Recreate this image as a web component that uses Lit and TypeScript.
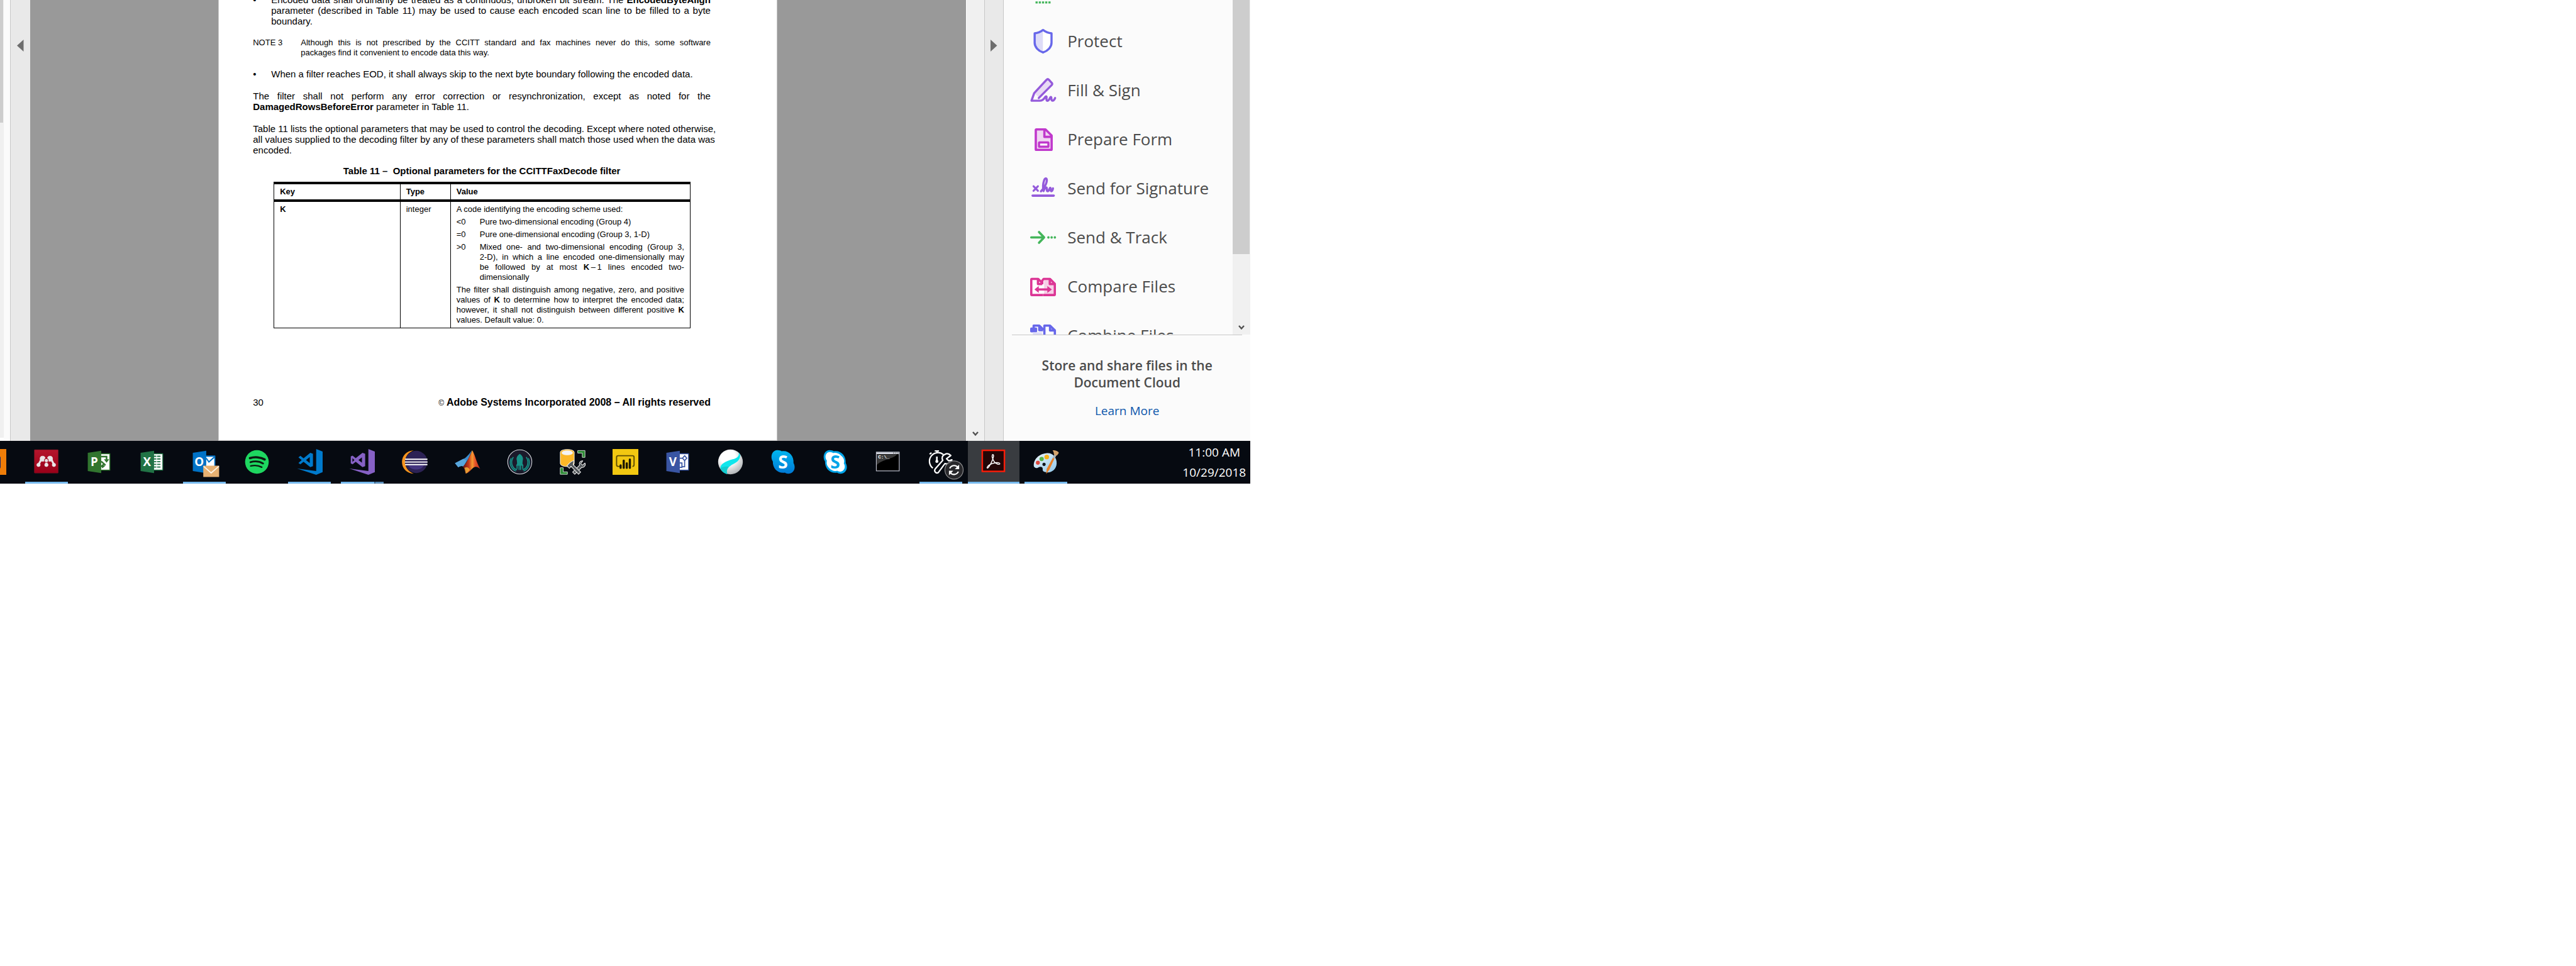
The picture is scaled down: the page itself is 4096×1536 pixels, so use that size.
import { LitElement, html, svg, css, TemplateResult } from "lit";
import { customElement, property } from "lit/decorators.js";
import { classMap } from "lit/directives/class-map.js";

type Glyph = TemplateResult;

/* ---------- tool icons, drawn on a 48 unit box ---------- */

const toolIcons: Record<string, Glyph> = {
  dots: svg`<path d="M10 43.2H38" stroke="#43b55a" stroke-width="4" stroke-dasharray="4 2" fill="none"/>`,
  protect: svg`
    <path d="M24 3.2C19 7 14 9 8.4 9.4V27C8.4 35 15 42 24 45Z" fill="#dedcf8"/>
    <path d="M24 3.2C29 7 34 9 39.800 9.400V27C39.800 35 33 42 24 45Z" fill="#fff"/>
    <path d="M24 3.200C19 7 14 9 8.400 9.400V27C8.400 35 15 42 24 45C33 42 39.800 35 39.800 27V9.400C34 9 29 7 24 3.200Z" fill="none" stroke="#6767ea" stroke-width="4" stroke-linejoin="round"/>`,
  sign: svg`
    <path d="M8 29.500L32.800 4L41 12L17 38Z" fill="#e8daf4"/>
    <path d="M16 38.500L40 14.500C41.500 13 41.500 11.500 40 10L35 4.500C33.500 3 32 3 30.500 4.500L7.500 29.500L2.500 43.500H18C22 43.500 25 41 27 38C29 34.500 31 34.500 30.500 38C30 42.500 30.500 44 33 43.500C36 42.500 36.500 37 38.500 36.500C40.500 36.500 38.500 42.500 41 43.300C43.500 44 45 42 46.500 38.500" fill="none" stroke="#945adb" stroke-width="4" stroke-linejoin="round" stroke-linecap="round"/>`,
  form: svg`
    <path d="M10.500 5.600H29L40 17V43.600H10.500Z" fill="#f0d5f2"/>
    <path d="M11.500 5.600H28.500L40 17V42.600Q40 43.600 39 43.600H11.500Q10.500 43.600 10.500 42.600V6.600Q10.500 5.600 11.500 5.600Z M26.500 6V19.500H39" fill="none" stroke="#c038cc" stroke-width="4.200" stroke-linejoin="round"/>
    <rect x="16.500" y="29.800" width="17.500" height="8" rx="1" fill="#fff" stroke="#c038cc" stroke-width="4"/>`,
  signature: svg`
    <g fill="none" stroke="#945adb" stroke-linecap="round" stroke-linejoin="round">
      <path d="M6.300 20L14.500 28.500M14.500 20L6.300 28.500" stroke-width="3.600"/>
      <path d="M20 29.500C26 24 31.500 14 31 8C30.500 4.500 27.500 4.500 26 9C24 15 23.500 23 25 29C26.500 24.500 29 22 30.500 22.500C32.500 24 29.500 29 32.500 29.300C36 29 35.500 24 37.500 23C39 23 37 29 39.500 29.300C41 29 42 27 42.500 24" stroke-width="4"/>
      <path d="M4.500 37.600H44" stroke-width="4.200"/>
    </g>`,
  track: svg`
    <g fill="none" stroke="#43b55a" stroke-width="4.200" stroke-linecap="round" stroke-linejoin="round">
      <path d="M2 24H26M16.500 14L26 24L16.500 34"/></g>
    <g fill="#43b55a"><circle cx="34" cy="24" r="2.200"/><circle cx="40" cy="24" r="2.200"/><circle cx="46" cy="24" r="2.200"/></g>`,
  compare: svg`
    <path d="M26 10H37L46 19V40H26Z" fill="#f6cfe6"/>
    <path d="M2 10H22V40H2Z" fill="#fff"/>
    <g fill="none" stroke="#dc3695" stroke-width="4.200" stroke-linejoin="round">
      <path d="M24 40H3Q2.100 40 2.100 39V11Q2.100 10 3 10H15L22 17M14.500 10V19.500H22.500"/>
      <path d="M24 40H45Q45.900 40 45.900 39V19L37 10H25L22.500 13V20M36.500 10V19.500H45"/>
    </g>
    <path d="M8 29.500L16 23V27.500H32V23L40.500 29.500L32 36V31.500H16V36Z" fill="#dc3695"/>`,
  combine: svg`
    <path d="M26 6H36L46 15V34H26Z" fill="#fff"/>
    <g fill="none" stroke="#6767ea" stroke-width="4.200" stroke-linejoin="round">
      <path d="M6.500 12V5.500H17L25 13.500M17 5.500V14H24"/>
      <path d="M26.500 34V5.500H37L46 14.500V34M37 5.500V14.500H46"/>
    </g>
    <rect x="0" y="9" width="13" height="9" rx="2" fill="#6767ea"/><path d="M5 18H22V30H5Z" fill="#dedcf8"/>`,
};

/* ---------- taskbar icons, drawn on a 48 unit box ---------- */

const officeDoor = (fill: string, letter: string): Glyph => svg`
  <path d="M3 7L28 3.200V44.800L3 41Z" fill=${fill}/>
  <text x="15" y="31.700" font-family="Open Sans, sans-serif" font-weight="700" font-size="22" text-anchor="middle" fill="#fff">${letter}</text>`;

const studioBlade = svg`<path d="M36 0L48 4.700V43L36 48L.5 36.300L36 41Z"/>`;

const taskIcons: Record<string, Glyph> = {
  mendeley: svg`
    <defs><linearGradient id="men" x2="0" y2="1"><stop offset="0" stop-color="#b5152c"/><stop offset="1" stop-color="#980019"/></linearGradient></defs>
    <rect x="1.800" y="1.300" width="44.600" height="43.400" rx="1" fill="url(#men)" stroke="#6d1422" stroke-width=".8"/>
    <g fill="#e9e4e6" stroke="#e9e4e6"><path d="M9.700 29L15 19M38.300 29L33.500 19M24.300 28V22M17 19L24.300 23L31 19" fill="none" stroke-width="3.600"/>
    <circle cx="17.300" cy="18" r="4.800"/><circle cx="31" cy="18" r="4.800"/>
    <circle cx="9.700" cy="29.500" r="3.200"/><circle cx="24.300" cy="29.500" r="3.200"/><circle cx="38.300" cy="29.500" r="3.200"/></g>
    <circle cx="24.300" cy="21.300" r="3.600" fill="#e9e4e6" stroke="#a60c23" stroke-width="1.200"/>`,
  project: svg`
    <rect x="26" y="8" width="19" height="32" rx="1" fill="#31752f"/><path d="M26 9.600H43.200V38.400H26Z" fill="#fff"/>
    <path d="M28 14H38V20M28 23L36 30M28 33L34 27" stroke="#31752f" stroke-width="3" fill="none"/><path d="M33 19H43L38 25.500Z M28 30L36 31L30 36Z" fill="#31752f"/>
    ${officeDoor("#31752f", "P")}`,
  excel: svg`
    <rect x="26" y="8" width="19" height="32" rx="1" fill="#217346"/><path d="M26 9.600H43.500V38.400H26Z" fill="#fff"/>
    <path d="M27 13.500H40M27 18.500H40M27 23.500H40M27 28.500H40M27 33.500H40" stroke="#217346" stroke-width="2.200"/><path d="M33 11V37" stroke="#fff" stroke-width="1.400"/>
    ${officeDoor("#217346", "X")}`,
  outlook: svg`
    <rect x="26" y="12" width="19" height="24" rx="1" fill="#0072c6"/><path d="M26 14.500H43V34H26Z" fill="#fff"/>
    <path d="M28 17L33 24L43.500 14.500" stroke="#0072c6" stroke-width="2.400" fill="none"/>
    ${officeDoor("#0072c6", "O")}
    <rect x="22.500" y="31" width="29.500" height="21" fill="#e7b172"/><path d="M23 32L37.200 44.500L51.500 32" fill="none" stroke="#fff6e8" stroke-width="2"/>`,
  spotify: svg`
    <circle cx="24" cy="24" r="22" fill="#1ed760"/>
    <g fill="none" stroke="#0b1a10" stroke-linecap="round"><path d="M11 17C20 14 31 15 38.500 19.500" stroke-width="4.200"/><path d="M12 24.500C20 22 29 23 35.500 26.800" stroke-width="3.400"/><path d="M12.500 31.500C20 29.800 27 30.400 33 33.800" stroke-width="2.800"/></g>`,
  vscode: svg`<g fill="#007acc">${studioBlade}
    <path fill-rule="evenodd" d="M25 7L30 8.700V32L25 33.700L12.500 23.700L6.600 28.300L3 26L9 20.500L3 15.500L6.600 12.700L12.500 17.300Z M24 15V26L17 20.500Z"/></g>`,
  studio: svg`<g fill="#8661c5">${studioBlade}
    <path fill-rule="evenodd" d="M25 7L30 8.700V32L25 33.700L12.400 23.700L6.600 28.300L3.200 26.700V13.700L6.600 12.300L12.400 17Z M24 15.500V25.500L17.500 20.500Z M6.300 17V24L10 20.500Z"/></g>`,
  eclipse: svg`
    <path d="M22 2.500C9 3 .2 12 .2 24S9 45.500 22 46C12 42 6 34 6 24S12 6 22 2.500Z" fill="#f7941e"/>
    <circle cx="26.800" cy="24" r="20.700" fill="#2c2255"/><path d="M12 30H41C39 35 34 38 26.500 38S14 35 12 30Z" fill="#44357f"/>
    <path d="M6 19H47.600M5.500 24.200H47.800M6 29H47.600" stroke="#fff" stroke-width="2.200"/>`,
  matlab: svg`
    <defs><linearGradient id="mat"><stop offset="0" stop-color="#5a1512"/><stop offset=".35" stop-color="#c93a1d"/><stop offset=".55" stop-color="#f59b31"/><stop offset=".7" stop-color="#e8552a"/><stop offset="1" stop-color="#b82a1c"/></linearGradient></defs>
    <path d="M.5 26.200L15.800 18.500C22 16 27 9 32 2.500L26 17L16.500 32.500C13 31 10 31.500 6.600 34Z" fill="#3f8fd0"/>
    <path d="M15.800 18.500L22 21.500L16.500 32.500C13 31 10 31.500 6.600 34L.5 26.200Z" fill="#58a6dc"/>
    <path d="M32.600 2.300C37 8 40 24 47.500 37.300C43 33 39 32 35 34.500C30 38 26 45 20.700 45.700C19 41 18 35 15 33C22 26 28 14 32.600 2.300Z" fill="url(#mat)"/>
    <path d="M20.700 45.700C19.500 40 19.500 38 18 35C23 33 26 34 28 39C25 43 23 45 20.700 45.700Z" fill="#fbc23c" opacity=".75"/>`,
  kraken: svg`
    <circle cx="24" cy="24" r="22.500" fill="#1b1a2b" stroke="#dfe3e8" stroke-width="1.200"/>
    <path d="M24 9C29 12 31 17 29.500 21L29 27L31 31H17L19 27L18.500 21C17 17 19 12 24 9Z" fill="#179287"/>
    <g fill="none" stroke="#179287" stroke-width="2"><path d="M22.700 28V39M25.600 28V39M19 30V37M29.400 30V37M12 15C6 24 9 36 19 38.500M36 15C42 24 39 36 29 38.500M8 17C3.500 27 8 38 17 41M40 17C44.500 27 40 38 31 41"/></g>`,
  database: svg`
    <path d="M1 6C1 -1 27 -1 27 6V27C27 34.500 1 34.500 1 27Z" fill="#fcb827" stroke="#fff" stroke-width="1"/><ellipse cx="14" cy="7" rx="10.500" ry="4.500" fill="#f4f4f4"/>
    <path d="M33.500 2.800H47V15.500H42V7.500H33.500Z M1 34.800H6.500V42.500H14.300V47H1Z" fill="#2b8a34" stroke="#e8f0e8" stroke-width="1"/>
    <g fill="#565b5e" stroke="#f0f0f0" stroke-width="1.200" stroke-linejoin="round">
      <path d="M47 26L42.500 30L39 27L43 22C38 21.500 35 26 37 30L24 43L28 47L41 34C45 35 49 31 47 26Z"/>
      <path d="M26.500 21.500C21 23 17 27 13.500 31.500L18 36L21 32L35 47L39 43L25 29Z"/>
    </g>`,
  powerbi: svg`
    <rect width="48" height="48" fill="#f2c811"/><path d="M13 32.300H10.500Q7.500 32.300 7.500 29.300V15.300Q7.500 12.500 10.500 12.500H37Q40 12.500 40 15.300V29.300Q40 32.300 37 32.300" fill="none" stroke="#5d4c03" stroke-width="2.200"/>
    <path d="M15 30.500V35M20.800 21.500V35M26.500 26.500V35M32.200 19.500V35" stroke="#1f1a04" stroke-width="4" stroke-linecap="round"/>`,
  visio: svg`
    <rect x="26" y="8" width="19" height="32" rx="1" fill="#3955a3"/><path d="M26 9.600H43.500V38.400H26Z" fill="#fff"/>
    <path d="M37 12.500L41 17L37 21.500L33 17Z M28 17H33M37 21.500V33H33M27 26H32V34H27" fill="none" stroke="#3955a3" stroke-width="2"/>
    ${officeDoor("#3955a3", "V")}`,
  ball: svg`
    <defs><radialGradient id="bal" cx=".4" cy=".3" r=".75"><stop offset=".4" stop-color="#fff"/><stop offset="1" stop-color="#a9adb0"/></radialGradient></defs>
    <circle cx="24" cy="24" r="23" fill="url(#bal)"/>
    <path d="M39 6C41.500 13 36 17 28 19C14 23 5 28 5 36C8 42 13 46 18 46.500C15 38 21 32 29 28C38 24 42.500 18 42 10.500Z" fill="#0fe6ec"/>
    <path d="M5 36C8 42 13 46 18 46.500C16 40 18 36 21 33C15 32 9 33 5 36Z" fill="#12b9bd" opacity=".6"/>`,
  skype: svg`
    <defs><linearGradient id="sky" x2="0" y2="1"><stop offset="0" stop-color="#00b7f0"/><stop offset="1" stop-color="#0078d4"/></linearGradient></defs>
    <g fill="url(#sky)"><path d="M13 2C17 2 19 3 21 4C34 2 44 12 43 26C46 31 46 38 42 42C38 46.500 31 47 27 44C14 46 4 36 4.500 23C1 18 1.500 11 4 7C6 4 9 2 13 2Z"/></g>
    <text x="23.500" y="35.800" font-family="Open Sans, sans-serif" font-weight="700" font-size="33" text-anchor="middle" fill="#fff">S</text>`,
  skypeBusiness: svg`
    <path d="M13 2C17 2 19 3 21 4C34 2 44 12 43 26C46 31 46 38 42 42C38 46.500 31 47 27 44C14 46 4 36 4.500 23C1 18 1.500 11 4 7C6 4 9 2 13 2Z" fill="#00a4e8"/>
    <path d="M13 5.500C16 5.500 18 6.500 20 7.500C23 6 32 8 35 13C40 17 41 22 39.500 27C42 31 42 36 39 39C36 43 31 43 27.500 40.500C22 42 15 39 12 35C7.500 31 7 26 8 21.500C5 18 4.500 12 7 9C8.500 6.500 11 5.500 13 5.500Z" fill="#fff"/>
    <text x="23.500" y="35.800" font-family="Open Sans, sans-serif" font-weight="700" font-size="33" text-anchor="middle" fill="#00a4e8">S</text>`,
  console: svg`
    <rect x="1.700" y="5.700" width="42.600" height="35" fill="#000" stroke="#b9bcc9" stroke-width="1.400"/><path d="M2 6H44V9.500H2Z" fill="#d5d8e2"/>
    <path d="M2.500 10H40C37 17 10 20 2.500 30Z" fill="#3a3a3a"/><path d="M33 7.500H35M37 7.500H39M41 7.500H43" stroke="#555" stroke-width="1.500"/>
    <text x="5" y="17.500" font-family="Liberation Mono, monospace" font-size="9" font-weight="700" fill="#fff">C:\\_</text>`,
  profiler: svg`
    <g fill="none" stroke="#fff" stroke-width="2.600"><path d="M12 3.500H20M16 4V8M2.500 9.500L6 7M28 10A15.500 15.500 0 1 0 8.500 35.500"/>
    <path d="M16 14V23" stroke-width="3"/><path d="M31 10C25 12 25 18 27 21L13 37C10 41 14 46 18.500 44L31 27C37 29 43 25 44 20L38 22L34 18L42 12C38 8 34 8 31 10Z" stroke-linejoin="round"/></g><circle cx="16" cy="23" r="2.800" fill="#fff"/>
    <circle cx="48" cy="39" r="17" fill="#2b2b2e" fill-opacity=".92" stroke="#8d8d8f" stroke-width="1.400"/>
    <g fill="none" stroke="#fff" stroke-width="2.500"><path d="M40 36A9 9 0 0 1 55.500 34.500M56 42A9 9 0 0 1 40.500 43.500"/></g><path d="M57.500 29V37.500H49.500Z M38.500 49V40.500H46.500Z" fill="#fff"/>`,
  acrobat: svg`
    <rect x="3.400" y="2.400" width="41.200" height="39.200" fill="#220606" stroke="#f81c08" stroke-width="2.900"/>
    <path d="M12.500 34C14 29.500 21 27 28 25.500C33 24.700 36.500 26 36 27.800C35 29.500 30 28 26.500 24.500C22.500 20 21 13.500 22 11C23 9 25 10.500 24.300 14C23 21 17.500 31 14.500 34.500C13 36 12 35.500 12.500 34Z" fill="none" stroke="#fff" stroke-width="1.700"/>`,
  paint: svg`
    <defs><linearGradient id="pal" x2="1" y2="1"><stop offset="0" stop-color="#eef7fd"/><stop offset="1" stop-color="#8fc6e8"/></linearGradient></defs>
    <path d="M24 8C35 6 44 15 43.500 27C43 38 34 44 26 43.500C19 43 17 41 17.500 37C18 33 13 32 10 34C6 37 2 35 1 32C0 19 11 9 24 8Z" fill="url(#pal)"/>
    <circle cx="20" cy="28.500" r="3" fill="#10151c"/><circle cx="8.500" cy="25.500" r="3.700" fill="#dd4a3e"/><circle cx="15.500" cy="18.500" r="4" fill="#58b446"/><circle cx="25" cy="14.800" r="4.300" fill="#f7b219"/>
    <path d="M36.500 16L39.500 17.500L30 38L24 46.500L25 37Z" fill="#ea8128"/><path d="M36 16L39.800 9L43 11L40 18Z" fill="#aeb5ba"/><path d="M36 2.500C41 2 46 4 47.500 7C46 10 44 12 42.500 12.500L38.500 10C38 7 38 5 36 2.500Z" fill="#d3a26b"/>`,
};

const tools = [
  { icon: "dots", label: "" },
  { icon: "protect", label: "Protect" },
  { icon: "sign", label: "Fill & Sign" },
  { icon: "form", label: "Prepare Form" },
  { icon: "signature", label: "Send for Signature" },
  { icon: "track", label: "Send & Track" },
  { icon: "compare", label: "Compare Files" },
  { icon: "combine", label: "Combine Files" },
];

const tasks: { icon: string; state?: "open" | "stacked" | "active" }[] = [
  { icon: "mendeley", state: "open" },
  { icon: "project" },
  { icon: "excel" },
  { icon: "outlook", state: "open" },
  { icon: "spotify" },
  { icon: "vscode", state: "open" },
  { icon: "studio", state: "stacked" },
  { icon: "eclipse" },
  { icon: "matlab" },
  { icon: "kraken" },
  { icon: "database" },
  { icon: "powerbi" },
  { icon: "visio" },
  { icon: "ball" },
  { icon: "skype" },
  { icon: "skypeBusiness" },
  { icon: "console" },
  { icon: "profiler", state: "open" },
  { icon: "acrobat", state: "active" },
  { icon: "paint", state: "open" },
];

/* Vertical scroll bar with an optional thumb and down arrow. */
@customElement("scroll-track")
export class ScrollTrack extends LitElement {
  @property({ type: Number }) thumb = 0;
  @property({ type: Boolean }) arrow = false;

  static styles = css`
    :host { display: flex; flex-direction: column; justify-content: space-between; background: #f0f0f0; }
    .thumb { background: #cdcdcd; margin-right: 1px; }
    .arrow { border: 0; padding: 0 0 7px; background: none; display: flex; justify-content: center; margin-top: auto; }
    .arrow svg { width: 10px; height: 8px; }
  `;

  render() {
    return html`
      <div class="thumb" style="height:${this.thumb}%"></div>
      ${this.arrow
        ? html`<button class="arrow"><svg viewBox="0 0 10 8"><path d="M1 1L5 5.500L9 1" fill="none" stroke="#505050" stroke-width="2.400"/></svg></button>`
        : null}
    `;
  }
}

@customElement("pdf-page")
export class PdfPage extends LitElement {
  static styles = css`
    :host {
      display: flex; flex-direction: column; box-sizing: border-box; overflow: hidden;
      background: #fff; border: 1px solid #c8c8c8; border-top: 0;
      padding: 0 105px 50px 54px;
      font: 15px/17px "Liberation Sans", Arial, sans-serif; color: #000;
    }
    p, ul, dl, dd { margin: 0; padding: 0; }
    .full { display: block; white-space: nowrap; text-align: justify; text-align-last: justify; }
    ul { list-style: none; }
    li { display: grid; grid-template-columns: 29px 1fr; margin-bottom: 18px; }
    .first { margin-top: -9px; }
    .note { display: grid; grid-template-columns: 76px 1fr; font-size: 13px; line-height: 16px; margin-bottom: 17px; }
    .para { margin-bottom: 18px; }
    .title { text-align: center; font-weight: 700; white-space: pre; margin: -2px 0 9px; }
    table { margin: 0 32px 0 33px; border-collapse: separate; border-spacing: 0; table-layout: fixed; font-size: 13px; line-height: 16px; border-left: 1px solid #000; }
    th, td { text-align: left; vertical-align: top; padding: 4px 9px; border-right: 1px solid #000; }
    th { border-top: 4px solid #000; border-bottom: 4px solid #000; }
    td { border-bottom: 1px solid #000; }
    .key { width: 30.300%; }
    .type { width: 12.100%; }
    dl { display: grid; grid-template-columns: 37px 1fr; row-gap: 4px; margin: 4px 0; }
    .foot { display: flex; justify-content: space-between; align-items: baseline; margin-top: auto; padding-top: 109px; line-height: 18px; }
    .legal { font-size: 16px; font-weight: 700; }
    .mark { font-size: 12px; font-weight: 400; }
  `;

  render() {
    return html`
      <ul class="first">
        <li><span>•</span><span><span class="full">Encoded data shall ordinarily be treated as a continuous, unbroken bit stream. The <b>EncodedByteAlign</b></span>
          <span class="full">parameter (described in Table 11) may be used to cause each encoded scan line to be filled to a byte</span>
          boundary.</span></li>
      </ul>
      <div class="note"><span>NOTE 3</span><p><span class="full">Although this is not prescribed by the CCITT standard and fax machines never do this, some software</span>
        packages find it convenient to encode data this way.</p></div>
      <ul>
        <li><span>•</span><span>When a filter reaches EOD, it shall always skip to the next byte boundary following the encoded data.</span></li>
      </ul>
      <p class="para"><span class="full">The filter shall not perform any error correction or resynchronization, except as noted for the</span>
        <b>DamagedRowsBeforeError</b> parameter in Table 11.</p>
      <p class="para"><span class="full">Table 11 lists the optional parameters that may be used to control the decoding. Except where noted otherwise,</span>
        <span class="full">all values supplied to the decoding filter by any of these parameters shall match those used when the data was</span>
        encoded.</p>
      <div class="title">Table 11 –  Optional parameters for the CCITTFaxDecode filter</div>
      <table>
        <thead>
          <tr><th class="key">Key</th><th class="type">Type</th><th>Value</th></tr>
        </thead>
        <tbody>
          <tr>
            <td><b>K</b></td>
            <td>integer</td>
            <td>
              <p>A code identifying the encoding scheme used:</p>
              <dl>
                <dt>&lt;0</dt><dd>Pure two-dimensional encoding (Group 4)</dd>
                <dt>=0</dt><dd>Pure one-dimensional encoding (Group 3, 1-D)</dd>
                <dt>&gt;0</dt><dd><span class="full">Mixed one- and two-dimensional encoding (Group 3,</span>
                  <span class="full">2-D), in which a line encoded one-dimensionally may</span>
                  <span class="full">be followed by at most <b>K</b>&#8201;–&#8201;1 lines encoded two-</span>
                  dimensionally</dd>
              </dl>
              <p><span class="full">The filter shall distinguish among negative, zero, and positive</span>
                <span class="full">values of <b>K</b> to determine how to interpret the encoded data;</span>
                <span class="full">however, it shall not distinguish between different positive <b>K</b></span>
                values. Default value: 0.</p>
            </td>
          </tr>
        </tbody>
      </table>
      <div class="foot"><span>30</span><span class="legal"><span class="mark">©</span> Adobe Systems Incorporated 2008 – All rights reserved</span></div>
    `;
  }
}

@customElement("tools-pane")
export class ToolsPane extends LitElement {
  static styles = css`
    :host { display: flex; flex-direction: column; background: #fbfbfb; font-family: "Open Sans", "Noto Sans", sans-serif; color: #4b4b4b; }
    .upper { flex: 1 1 0; min-height: 0; display: flex; overflow: hidden; }
    .list { flex: 1; margin-top: -52px; }
    .tool { display: flex; align-items: center; gap: 18px; width: 100%; height: 78px; border: 0; background: none; padding: 0 0 0 42px; font: inherit; font-size: 26px; line-height: 36px; color: inherit; text-align: left; }
    .tool svg { width: 41px; height: 41px; overflow: visible; flex: none; }
    scroll-track { width: 28px; }
    .promo { margin: 0 13px; border-top: 1px solid #c8c8c8; padding: 35px 0 34px; text-align: center; }
    .lead { margin: 0 auto 18px; width: 300px; font-size: 21px; line-height: 27px; font-weight: 600; }
    .more { font-size: 19px; line-height: 27px; color: #0d57ab; text-decoration: none; display: block; }
  `;

  render() {
    return html`
      <div class="upper">
        <div class="list">
          ${tools.map(
            (t) => html`<button class="tool"><svg viewBox="0 0 48 48">${toolIcons[t.icon]}</svg>${t.label}</button>`
          )}
        </div>
        <scroll-track thumb="76" arrow></scroll-track>
      </div>
      <div class="promo">
        <p class="lead">Store and share files in the Document Cloud</p>
        <a class="more" href="#">Learn More</a>
      </div>
    `;
  }
}

@customElement("task-bar")
export class TaskBar extends LitElement {
  static styles = css`
    :host { display: grid; grid-template-columns: 32px 1fr 283px; background: #060a11; color: #fff; }
    .cut { padding-top: 13px; }
    .cut svg { display: block; width: 10px; height: 41px; }
    .apps { display: grid; grid-auto-flow: column; grid-auto-columns: 1fr; }
    .app { display: flex; flex-direction: column; align-items: center; gap: 11px; margin: 0 1px; padding: 13px 0 0; border: 0; background: none; }
    .app svg { display: block; width: 41px; height: 41px; overflow: visible; }
    .line { height: 3px; width: 68px; }
    .open .line { background: #76b9ed; }
    .stacked .line { background: linear-gradient(90deg, #76b9ed 53px, #416587 53px 55px, #5b8fba 55px); }
    .active { background: #393c40; }
    .active .line { width: 100%; background: #76b9ed; }
    .clock { padding: 2px 7px 0 0; justify-self: end; text-align: center; font: 19px/32px "Open Sans", "Noto Sans", sans-serif; }
  `;

  render() {
    return html`
      <div class="cut"><svg viewBox="0 0 10 41"><path d="M0 0H10V41H0Z" fill="#ef7d08"/><path d="M0 12Q1 12 1 14V28Q1 30 0 31Z" fill="#1d2a6b"/></svg></div>
      <div class="apps">
        ${tasks.map(
          (t) => html`<button class=${classMap({ app: true, open: t.state === "open", stacked: t.state === "stacked", active: t.state === "active" })}>
            <svg viewBox="0 0 48 48">${taskIcons[t.icon]}</svg><span class="line"></span>
          </button>`
        )}
      </div>
      <div class="clock"><div>11:00 AM</div><div>10/29/2018</div></div>
    `;
  }
}

@customElement("app-root")
export class AppRoot extends LitElement {
  static styles = css`
    :host { display: block; min-height: 100vh; background: #fff; }
    .window { width: 48.540%; }
    .main { display: grid; grid-template-columns: 6px 10px 32px 1fr 28px 31px 392px; }
    .left { margin-bottom: 5px; }
    .edge { background: #fbfbfb; }
    .rail { display: flex; align-items: flex-start; justify-content: center; padding: 63px 0 0; border: 0; border-left: 1px solid #c8c8c8; background: #e9e9e9; }
    .rail svg { width: 11px; height: 19px; }
    .end { border-right: 1px solid #c8c8c8; }
    .canvas { background: #999; display: grid; grid-template-columns: 299fr 888fr 300fr; border-right: 1px solid #fff; }
    pdf-page { grid-column: 2; }
  `;

  render() {
    return html`
      <div class="window">
        <div class="main">
          <scroll-track class="left" thumb="28"></scroll-track>
          <div class="edge"></div>
          <button class="rail"><svg viewBox="0 0 11 19"><path d="M10.500 0V19L0 9.500Z" fill="#6e6e6e"/></svg></button>
          <div class="canvas"><pdf-page></pdf-page></div>
          <scroll-track arrow></scroll-track>
          <button class="rail end"><svg viewBox="0 0 11 19"><path d="M0 0V19L10.500 9.500Z" fill="#6e6e6e"/></svg></button>
          <tools-pane></tools-pane>
        </div>
        <task-bar></task-bar>
      </div>
    `;
  }
}
